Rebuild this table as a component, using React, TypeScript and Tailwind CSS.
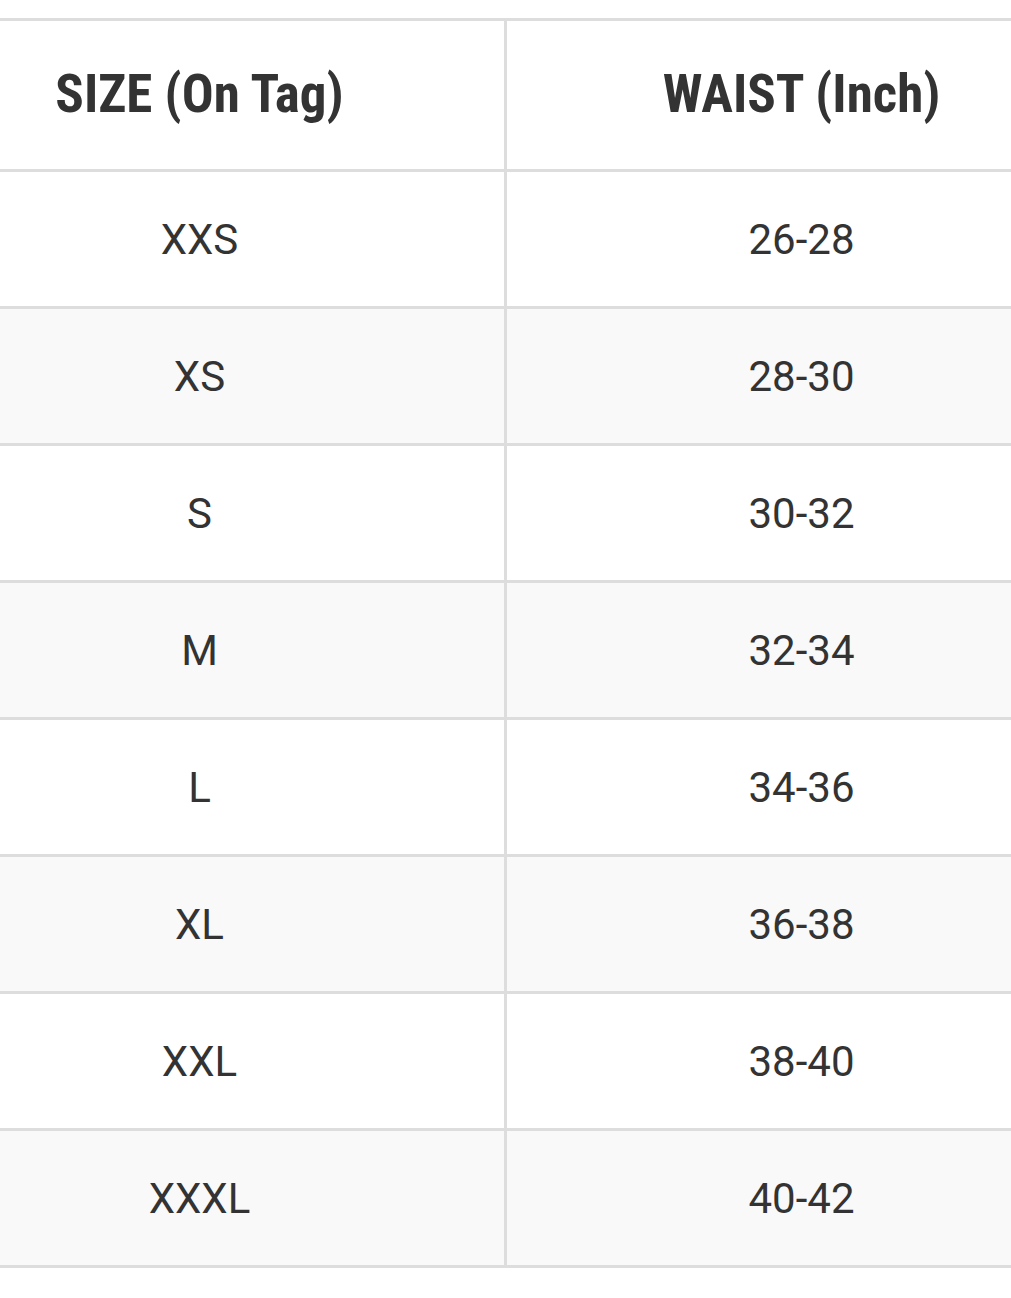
import React from "react";

const rows: [string, string][] = [
  ["XXS", "26-28"],
  ["XS", "28-30"],
  ["S", "30-32"],
  ["M", "32-34"],
  ["L", "34-36"],
  ["XL", "36-38"],
  ["XXL", "38-40"],
  ["XXXL", "40-42"],
];

const App: React.FC = () => {
  return (
    <div className="min-h-[1298px] w-full overflow-hidden bg-white pt-[18px] text-[#333333]">
      <div className="ml-[-105px] w-[1201px] border-t-[3px] border-[#dddddd]">
        <div className="grid h-[151px] grid-cols-[612px_589px] border-b-[3px] border-[#dddddd]">
          <div className="flex items-center justify-center border-r-[3px] border-[#dddddd] font-['Roboto_Condensed','Liberation_Sans_Narrow','DejaVu_Sans_Condensed',sans-serif] text-[53px] font-bold">
            SIZE (On Tag)
          </div>
          <div className="flex items-center justify-center font-['Roboto_Condensed','Liberation_Sans_Narrow','DejaVu_Sans_Condensed',sans-serif] text-[53px] font-bold">
            WAIST (Inch)
          </div>
        </div>
        {rows.map(([size, waist], i) => (
          <div
            key={size}
            className={`grid h-[137px] grid-cols-[612px_589px] border-b-[3px] border-[#dddddd] font-['Roboto',sans-serif] text-[42px] ${
              i % 2 === 1 ? "bg-[#f9f9f9]" : "bg-white"
            }`}
          >
            <div className="flex items-center justify-center border-r-[3px] border-[#dddddd]">{size}</div>
            <div className="flex items-center justify-center">{waist}</div>
          </div>
        ))}
      </div>
    </div>
  );
};

export default App;
